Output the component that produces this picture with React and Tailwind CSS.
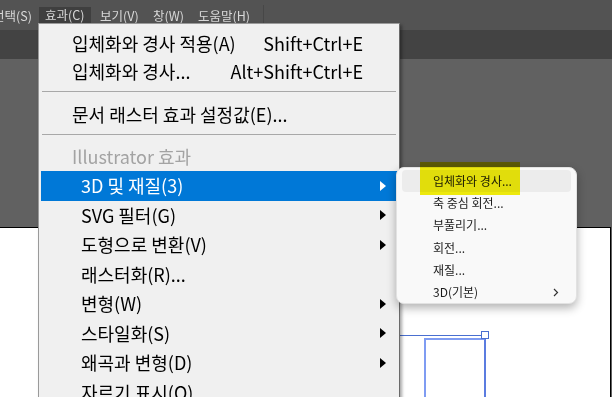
import React from 'react';

const font = { fontFamily: '"Noto Sans CJK KR", "Noto Sans", sans-serif' };

const Arrow = () => (
  <svg width="6" height="10" viewBox="0 0 6 10" className="shrink-0">
    <path d="M0 0 L6 5 L0 10 Z" fill="currentColor" />
  </svg>
);

const subItems = ['SVG 필터(G)', '도형으로 변환(V)', '래스터화(R)...', '변형(W)', '스타일화(S)', '왜곡과 변형(D)', '자르기 표시(O)'];
const hasArrow = [true, true, false, true, true, true, false];

const App = () => {
  return (
    <div className="relative w-[612px] h-[397px] overflow-hidden bg-[#616161] flex flex-col" style={font}>
      {/* menubar */}
      <div className="h-[30px] bg-[#535353] flex items-start pt-[7px] text-[12.5px] text-[#d8d8d8] leading-none shrink-0">
        <div className="w-[39px] h-[18px] flex items-center justify-end pr-[7px] overflow-hidden whitespace-nowrap">선택(S)</div>
        <div className="w-[52px] h-[23px] bg-[#3f3f3f] flex items-start pt-[2px] pl-[6px] whitespace-nowrap">효과(C)</div>
        <div className="w-[62px] h-[18px] flex items-center pl-[9px] whitespace-nowrap">보기(V)</div>
        <div className="w-[45px] h-[18px] flex items-center whitespace-nowrap">창(W)</div>
        <div className="w-[65px] h-[18px] flex items-center whitespace-nowrap">도움말(H)</div>
        <div className="w-px h-[23px] bg-[#474747] -mt-[2px]" />
      </div>
      <div className="h-[29px] bg-[#434343] shrink-0" />

      {/* canvas */}
      <div className="flex-1 pt-[168px]">
        <div className="relative w-[611px] h-[200px] bg-white border-t border-r border-black">
          <div className="absolute left-[400px] top-[107px] w-[83px] h-px bg-[#4a6fd0]" />
          <div className="absolute left-[424px] top-[110px] w-[62px] h-[80px] border-2 border-[#7f9cf2] border-r-[#5b7ce0]" />
          <div className="absolute left-[481px] top-[103px] w-[8px] h-[8px] bg-white border border-[#4a6fd0]" />
        </div>
      </div>

      {/* main dropdown */}
      <div className="absolute left-[38px] top-[23px] w-[362px] h-[400px] bg-[#f0f0f0] border border-[#9a9a9a] border-r-[#6a6a6a] shadow-[2px_2px_3px_rgba(0,0,0,0.35)] text-[18px] text-black pt-[5px]">
        <div className="h-[28px] flex items-center pl-[33px] pr-[36px]">
          <span>입체화와 경사 적용(A)</span>
          <span className="ml-auto">Shift+Ctrl+E</span>
        </div>
        <div className="h-[28px] flex items-center pl-[33px] pr-[36px]">
          <span>입체화와 경사...</span>
          <span className="ml-auto">Alt+Shift+Ctrl+E</span>
        </div>
        <div className="h-[15px] pt-[6px] px-[3px]">
          <div className="h-px bg-[#a8a8a8]" />
        </div>
        <div className="h-[29px] flex items-center pl-[33px]">문서 래스터 효과 설정값(E)...</div>
        <div className="h-[13px] pt-[5px] px-[3px]">
          <div className="h-px bg-[#a8a8a8]" />
        </div>
        <div className="h-[29px] flex items-center pl-[33px] text-[#a3a3a3]">Illustrator 효과</div>
        <div className="h-[29.5px] mx-[2px] flex items-center pl-[40px] pr-[11px] bg-[#0078d7] text-white">
          <span>3D 및 재질(3)</span>
          <span className="ml-auto"><Arrow /></span>
        </div>
        {subItems.map((s, i) => (
          <div key={s} className="h-[29.5px] mx-[2px] flex items-center pl-[40px] pr-[11px]">
            <span>{s}</span>
            {hasArrow[i] && <span className="ml-auto"><Arrow /></span>}
          </div>
        ))}
      </div>

      {/* submenu */}
      <div className="absolute left-[396px] top-[167px] w-[181px] h-[137px] bg-[#f9f9f9] border border-[#e2e2e2] rounded-[8px] shadow-[0_4px_10px_rgba(0,0,0,0.3)] py-[2px] px-[5px] text-[12px] text-[#1b1b1b]">
        {['입체화와 경사...', '축 중심 회전...', '부풀리기...', '회전...', '재질...'].map((s, i) => (
          <div key={s} className={`h-[22.2px] flex items-center pl-[31px] rounded-[4px] ${i === 0 ? 'bg-[#ececec]' : ''}`}>
            {s}
          </div>
        ))}
        <div className="h-[22.2px] flex items-center pl-[31px] pr-[12px]">
          <span>3D(기본)</span>
          <svg width="6" height="9" viewBox="0 0 6 9" className="ml-auto">
            <path d="M1 1 L4.5 4.5 L1 8" fill="none" stroke="#333" strokeWidth="1.2" />
          </svg>
        </div>
      </div>

      {/* yellow marker */}
      <div className="absolute left-[420px] top-[162px] w-[100px] h-[33px] bg-[#f3ef00] mix-blend-multiply opacity-95" />
    </div>
  );
};

export default App;
